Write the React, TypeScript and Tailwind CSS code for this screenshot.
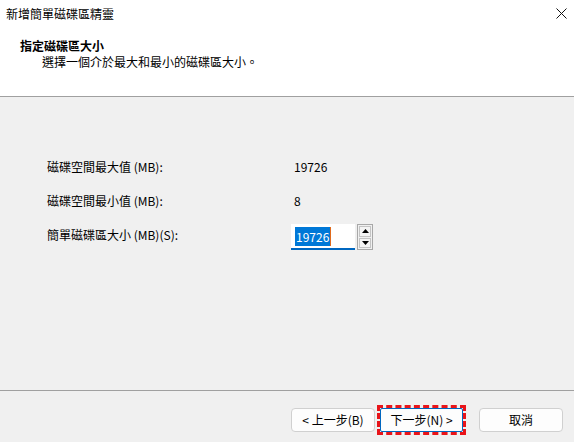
import React from "react";

const font = "[font-family:'Noto_Sans_CJK_TC','Microsoft_JhengHei',sans-serif]";

function Row({ label, children }: { label: string; children: React.ReactNode }) {
  return (
    <div className="flex h-[34px] items-center">
      <div className="w-[291px] pl-[47px]">{label}</div>
      <div className="flex items-center">{children}</div>
    </div>
  );
}

function SpinBox() {
  return (
    <div className="mt-[4px] flex items-stretch">
      <div className="flex h-[26px] w-[64px] items-center border-b-2 border-[#0067c0] bg-white pl-[4px]">
        <span className="bg-[#0078d7] px-[1px] leading-[19px] text-white">19726</span>
        <span className="h-[19px] w-[1px] bg-[#e06a1c]" />
      </div>
      <div className="ml-[2px] flex h-[26px] w-[16px] flex-col border border-[#a8a8a8] bg-[#f0f0f0] p-[1px]">
        <div className="flex flex-1 items-center justify-center border border-[#c4c4c4] bg-[#f4f4f4]">
          <svg width="7" height="4" viewBox="0 0 7 4">
            <path d="M3.5 0 L7 4 L0 4 Z" fill="#000" />
          </svg>
        </div>
        <div className="mt-[1px] flex flex-1 items-center justify-center border border-[#c4c4c4] bg-[#f4f4f4]">
          <svg width="7" height="4" viewBox="0 0 7 4">
            <path d="M0 0 L7 0 L3.5 4 Z" fill="#000" />
          </svg>
        </div>
      </div>
    </div>
  );
}

export default function App() {
  return (
    <div className={`flex h-[442px] w-[574px] flex-col bg-[#f0f0f0] text-[12px] leading-[16px] text-black ${font}`}>
      {/* header */}
      <div className="h-[97px] border-b border-[#a0a0a0] bg-white">
        <div className="flex items-start justify-between pl-[6px] pr-[7px] pt-[6px]">
          <span>新增簡單磁碟區精靈</span>
          <svg width="11" height="11" viewBox="0 0 11 11" className="mt-[2px]">
            <path d="M0.5 0.5 L10.5 10.5 M10.5 0.5 L0.5 10.5" stroke="#111" strokeWidth="1" />
          </svg>
        </div>
        <div className="pl-[20px] pt-[16px] font-bold">指定磁碟區大小</div>
        <div className="pl-[42px] pt-[0px]">選擇一個介於最大和最小的磁碟區大小。</div>
      </div>

      {/* body */}
      <div className="flex-1 pt-[53px]">
        <Row label="磁碟空間最大值 (MB):">
          <span className="pl-[3px]">19726</span>
        </Row>
        <Row label="磁碟空間最小值 (MB):">
          <span className="pl-[3px]">8</span>
        </Row>
        <Row label="簡單磁碟區大小 (MB)(S):">
          <SpinBox />
        </Row>
      </div>

      {/* footer */}
      <div className="h-[52px] border-t border-[#a0a0a0]">
        <div className="flex justify-end pr-[11px] pt-[17px]">
          <button className="h-[24px] w-[84px] rounded-[4px] border border-[#d0d0d0] bg-[#fdfdfd]">
            &lt; 上一步(B)
          </button>
          <div className="relative ml-[5px]">
            <button className="h-[24px] w-[83px] rounded-[2px] border border-[#0067c0] bg-[#fdfdfd]">
              下一步(N) &gt;
            </button>
            <div className="pointer-events-none absolute -inset-[3px] border-[3px] border-dashed border-[#e8141a]" />
          </div>
          <button className="ml-[16px] h-[24px] w-[84px] rounded-[4px] border border-[#d0d0d0] bg-[#fdfdfd]">
            取消
          </button>
        </div>
      </div>
    </div>
  );
}
